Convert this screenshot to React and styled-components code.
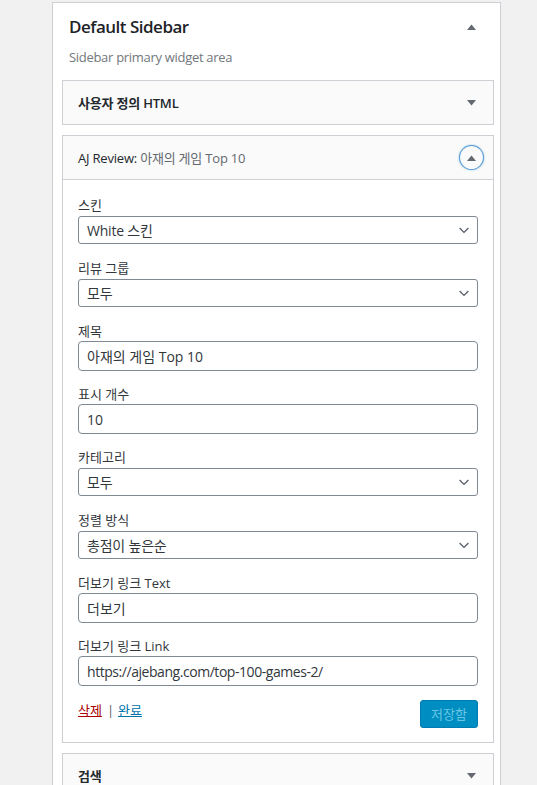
import React from 'react';
import styled, { createGlobalStyle } from 'styled-components';

const GlobalStyle = createGlobalStyle`
  html, body { margin: 0; padding: 0; background: #f1f1f1; overflow: hidden; }
  body {
    font-family: "Open Sans", "Noto Sans CJK KR", sans-serif;
    font-size: 13px;
    color: #23282d;
  }
  * { box-sizing: border-box; }
`;

const Page = styled.div`
  padding: 2px 0 0 52px;
`;

const SidebarPanel = styled.section`
  width: 449px;
  min-height: 820px;
  background: #fff;
  border: 1px solid #ccd0d4;
  border-bottom: none;
  padding: 0 6px 0 9px;
`;

const PanelHeader = styled.div`
  padding: 12px 18px 0 7px;
`;

const PanelTitleRow = styled.div`
  display: flex;
  align-items: center;
  justify-content: space-between;
  height: 24px;
`;

const PanelTitle = styled.h2`
  margin: 0;
  font-size: 17px;
  line-height: 24px;
  font-weight: 600;
  letter-spacing: -0.5px;
  color: #1d2327;
`;

const PanelDesc = styled.p`
  margin: 9px 0 0;
  font-size: 13px;
  line-height: 18px;
  letter-spacing: -0.3px;
  color: #72777c;
`;

const WidgetList = styled.div`
  display: flex;
  flex-direction: column;
  gap: 10px;
  margin-top: 14px;
`;

const Widget = styled.div`
  border: 1px solid #ccd0d4;
  background: #fff;
`;

const WidgetTop = styled.div`
  display: flex;
  align-items: center;
  justify-content: space-between;
  height: ${p => (p.$open ? '44px' : '43px')};
  padding: 0 10px 0 15px;
  background: #fafafa;
  border-bottom: ${p => (p.$open ? '1px solid #ccd0d4' : 'none')};
`;

const WidgetTitle = styled.h3`
  margin: 0;
  font-size: 13px;
  line-height: 18px;
  font-weight: ${p => (p.$bold ? 600 : 400)};
  letter-spacing: -0.2px;
  color: #23282d;
`;

const InTitle = styled.span`
  color: #646970;
`;

const ToggleButton = styled.span`
  display: flex;
  align-items: center;
  justify-content: center;
  width: 23px;
  height: 23px;
  border-radius: 50%;
  ${p =>
    p.$focused &&
    `box-shadow: 0 0 0 1px #5b9dd9, 0 0 2px 1px rgba(30, 140, 190, 0.5);`}
`;

const WidgetInside = styled.div`
  display: flex;
  flex-direction: column;
  gap: 13px;
  padding: 15px 15px 14px;
`;

const Field = styled.div`
  display: grid;
  grid-template-rows: 20px 30px;
`;

const Label = styled.label`
  font-size: 13px;
  line-height: 20px;
  color: #32373c;
`;

const SelectWrap = styled.div`
  position: relative;
  align-self: center;
`;

const Select = styled.select`
  appearance: none;
  -webkit-appearance: none;
  display: block;
  width: 100%;
  height: 28px;
  margin: 0;
  padding: 0 24px 0 8px;
  border: 1px solid #7e8993;
  border-radius: 3px;
  background: #fff;
  font-family: inherit;
  font-size: 14px;
  letter-spacing: -0.2px;
  color: #32373c;
  outline: none;
`;

const Chevron = styled.svg`
  position: absolute;
  right: 6px;
  top: 6px;
  width: 16px;
  height: 16px;
  pointer-events: none;
`;

const Input = styled.input`
  display: block;
  width: 100%;
  height: 30px;
  margin: 0;
  padding: 0 8px;
  border: 1px solid #7e8993;
  border-radius: 4px;
  background: #fff;
  font-family: inherit;
  font-size: 14px;
  letter-spacing: ${p => p.$tracking || '0'};
  color: #32373c;
  outline: none;
`;

const Actions = styled.div`
  display: flex;
  align-items: flex-start;
  justify-content: space-between;
  margin-top: 1px;
`;

const ActionLinks = styled.div`
  font-size: 13px;
  line-height: 20px;
  color: #555d66;
`;

const ActionLink = styled.a`
  color: ${p => (p.$danger ? '#a00' : '#0073aa')};
  text-decoration: underline;
`;

const Sep = styled.span`
  margin: 0 4px 0 5px;
`;

const SaveButton = styled.button`
  height: 28px;
  padding: 0 10px;
  border: 1px solid #007cb2;
  border-radius: 3px;
  background: #008ec2;
  color: #66c6e4;
  font-family: inherit;
  font-size: 13px;
  line-height: 26px;
  cursor: default;
`;

const Arrow = ({ up }) => (
  <svg width="9" height="6" viewBox="0 0 9 6" aria-hidden="true">
    {up ? (
      <polygon points="0,6 4.5,0.5 9,6" fill="#646970" />
    ) : (
      <polygon points="0,0 9,0 4.5,5.5" fill="#646970" />
    )}
  </svg>
);

const fields = [
  { label: '스킨', type: 'select', value: 'White 스킨' },
  { label: '리뷰 그룹', type: 'select', value: '모두' },
  { label: '제목', type: 'input', value: '아재의 게임 Top 10' },
  { label: '표시 개수', type: 'input', value: '10' },
  { label: '카테고리', type: 'select', value: '모두' },
  { label: '정렬 방식', type: 'select', value: '총점이 높은순' },
  { label: '더보기 링크 Text', type: 'input', value: '더보기' },
  {
    label: '더보기 링크 Link',
    type: 'input',
    value: 'https://ajebang.com/top-100-games-2/',
    tracking: '-0.45px',
  },
];

const FieldControl = ({ f, id }) =>
  f.type === 'select' ? (
    <SelectWrap>
      <Select id={id} defaultValue={f.value}>
        <option value={f.value}>{f.value}</option>
      </Select>
      <Chevron viewBox="0 0 20 20" aria-hidden="true">
        <path d="M4.5 7.5l5.5 5.5 5.5-5.5" fill="none" stroke="#555d66" strokeWidth="1.6" />
      </Chevron>
    </SelectWrap>
  ) : (
    <Input id={id} type="text" defaultValue={f.value} $tracking={f.tracking} />
  );

export default function App() {
  return (
    <>
      <GlobalStyle />
      <Page>
        <SidebarPanel>
          <PanelHeader>
            <PanelTitleRow>
              <PanelTitle>Default Sidebar</PanelTitle>
              <Arrow up />
            </PanelTitleRow>
            <PanelDesc>Sidebar primary widget area</PanelDesc>
          </PanelHeader>
          <WidgetList>
            <Widget>
              <WidgetTop>
                <WidgetTitle $bold>사용자 정의 HTML</WidgetTitle>
                <ToggleButton>
                  <Arrow />
                </ToggleButton>
              </WidgetTop>
            </Widget>
            <Widget>
              <WidgetTop $open>
                <WidgetTitle>
                  AJ Review: <InTitle>아재의 게임 Top 10</InTitle>
                </WidgetTitle>
                <ToggleButton $focused>
                  <Arrow up />
                </ToggleButton>
              </WidgetTop>
              <WidgetInside>
                {fields.map((f, i) => (
                  <Field key={f.label}>
                    <Label htmlFor={`f-${i}`}>{f.label}</Label>
                    <FieldControl f={f} id={`f-${i}`} />
                  </Field>
                ))}
                <Actions>
                  <ActionLinks>
                    <ActionLink $danger href="#">삭제</ActionLink>
                    <Sep>|</Sep>
                    <ActionLink href="#">완료</ActionLink>
                  </ActionLinks>
                  <SaveButton type="button">저장함</SaveButton>
                </Actions>
              </WidgetInside>
            </Widget>
            <Widget>
              <WidgetTop>
                <WidgetTitle $bold>검색</WidgetTitle>
                <ToggleButton>
                  <Arrow />
                </ToggleButton>
              </WidgetTop>
            </Widget>
          </WidgetList>
        </SidebarPanel>
      </Page>
    </>
  );
}
